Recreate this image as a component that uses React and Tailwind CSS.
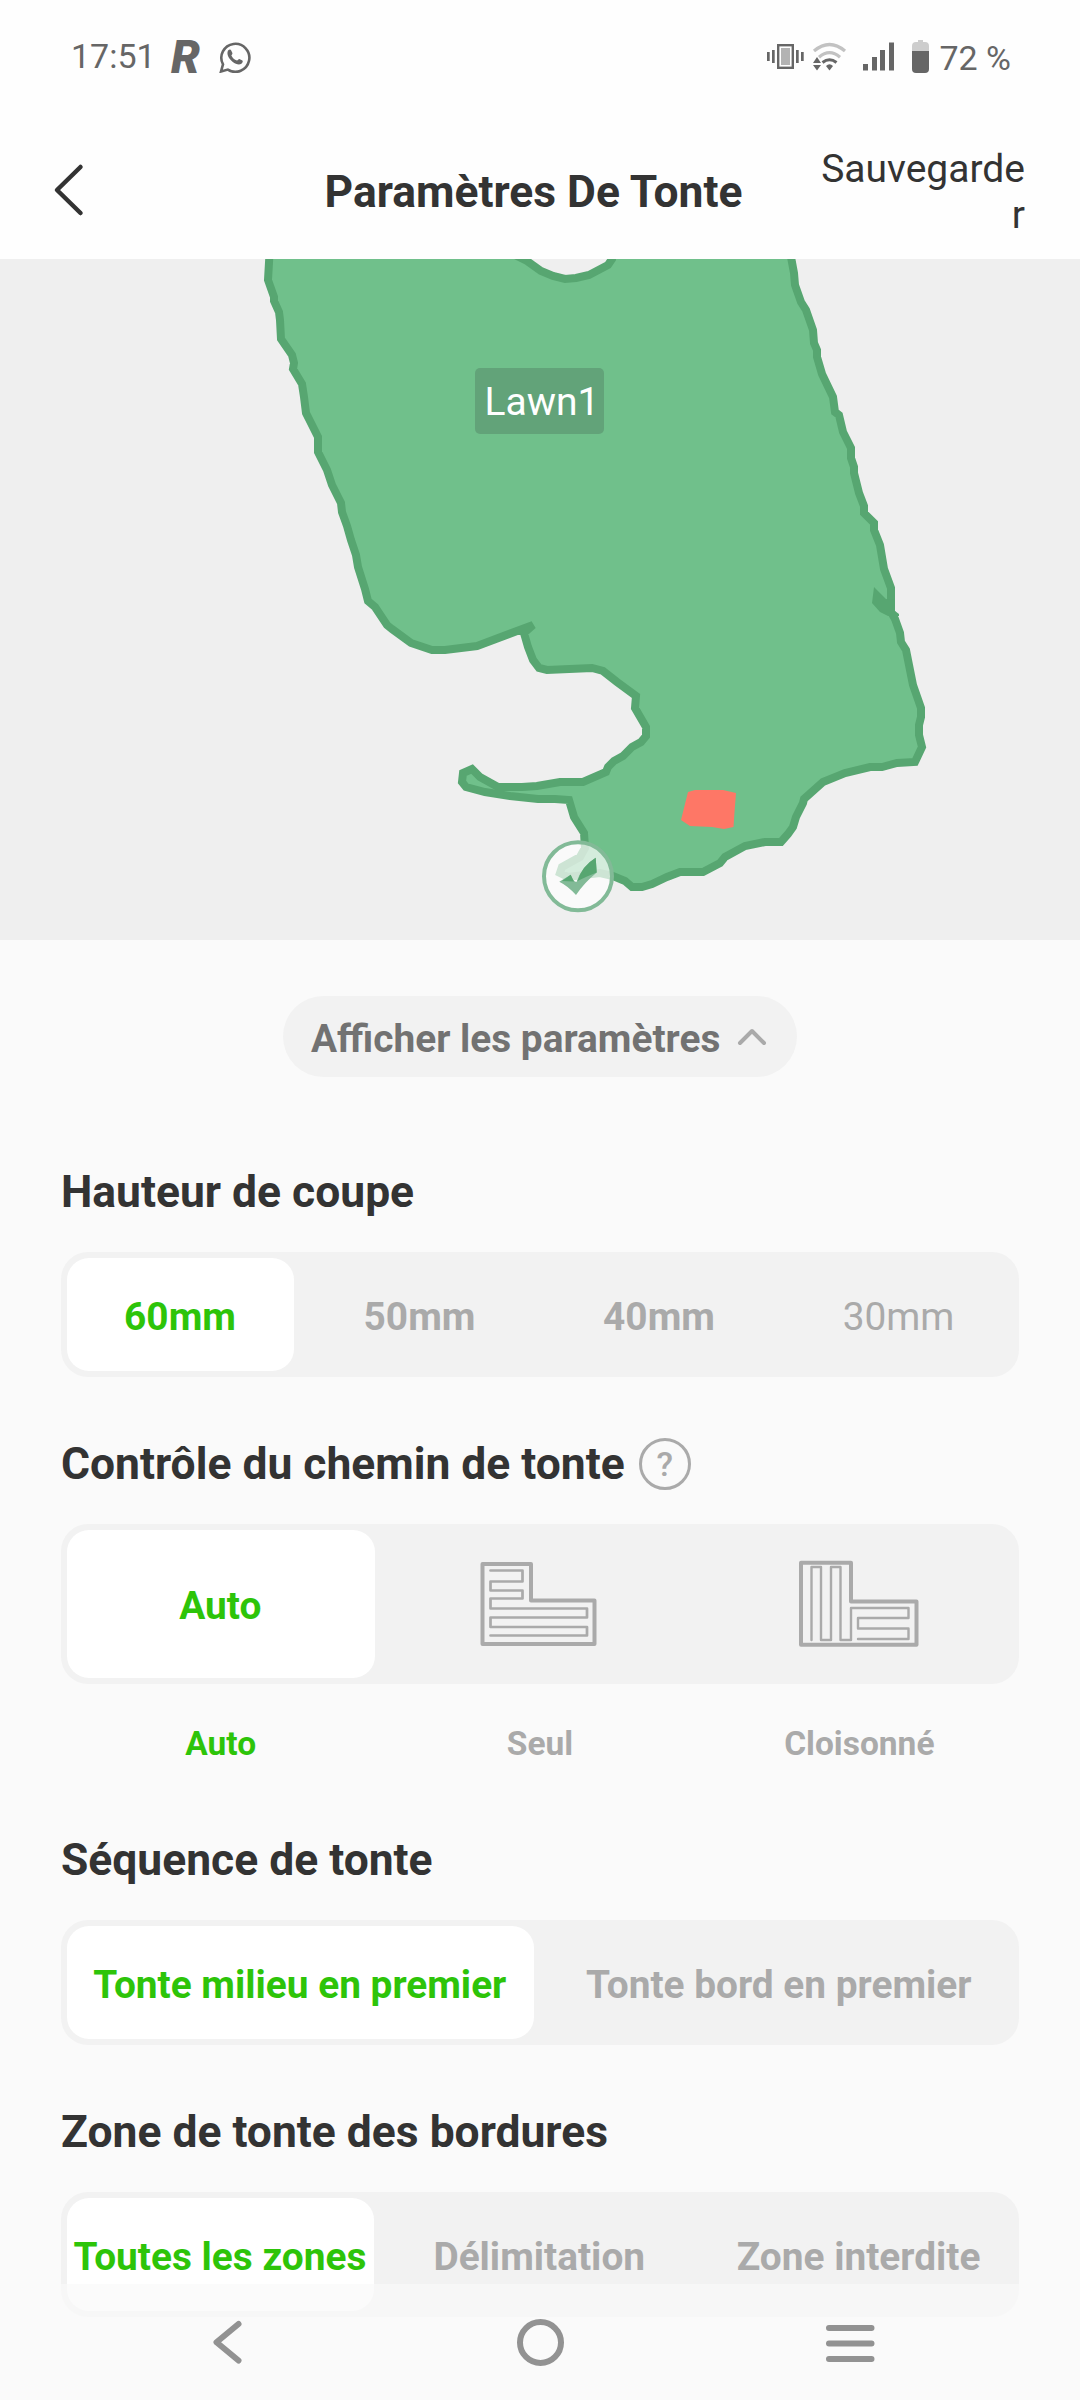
import React from "react";

const LAWN =
  "270,245 268,280 274,297 274,301 279,312 280,320 281,339 292,355 294,363 293,369 302,384 304,397 306,413 318,437 318,452 327,470 332,485 341,503 342,512 347,526 351,540 356,555 358,567 365,589 368,601 375,607 387,625 392,629 411,643 432,650 445,650 477,646 533,625 524,633 528,647 533,660 539,668 547,670 592,668 603,671 617,682 636,696 635,708 646,727 646,736 641,742 632,747 623,756 614,761 608,767 606,772 583,782 560,782 537,786 522,787 498,787 480,777 472,769 463,773 462,782 466,787 485,792 510,796 538,799 555,799 569,800 574,817 584,833 585,848 580,857 562,867 560,873 568,877 600,873 613,876 625,881 632,887 642,887 652,884 667,877 680,872 703,872 720,863 725,857 745,846 765,842 781,842 788,834 793,827 796,817 803,803 804,799 823,782 845,773 870,767 882,767 897,763 915,762 922,747 919,735 919,725 921,717 921,708 913,685 906,650 901,642 900,633 895,619 891,612 891,600 891,588 884,569 880,545 874,530 874,523 864,513 864,506 859,493 854,473 854,467 851,458 851,448 843,432 839,415 835,412 833,397 822,374 817,357 817,350 814,343 813,330 806,310 801,302 795,285 794,273 791,257 789,245 612,245 612,259 608,265 589,275 576,278 565,279 553,276 541,271 527,261 505,250 490,245";

function StatusBar() {
  return (
    <div className="flex h-[113px] items-start justify-between pl-[71px] pr-[69px] text-[#666]">
      <div className="flex h-[113px] items-center">
        <span className="w-[100px] text-[34px]">17:51</span>
        <span className="w-[48px] text-[46px] font-black italic leading-none">R</span>
        <svg className="h-[32px] w-[32px]" viewBox="0 0 32 32" fill="none">
          <path d="M2 30.5 4 23.4A14 14 0 1 1 8.8 28.6Z" stroke="#666" strokeWidth="2.6" />
          <path
            d="M9 9.5c1.600-1.500 2.600-1.300 3.200 0l1.200 2.500c.3 1-.9 1.900-1 2.500 1.200 2.500 3 4.200 5.600 5.100.8-.1 1.600-1.700 2.400-1.500l3 1.500c1 .7-.1 2.800-1.400 3.500-2.200 1.200-5.400.1-8.500-2.300-3.500-3-6.300-7.600-4.500-11.300Z"
            fill="#666"
          />
        </svg>
      </div>
      <div className="flex h-[114px] items-center">
        <svg className="h-[36px] w-[166px]" viewBox="766 39 166 36" fill="none">
          <rect x="778.2" y="45.200" width="14.600" height="22.600" stroke="#666" strokeWidth="2.400" />
          <rect x="781" y="48" width="9" height="17" fill="#b3b3b3" />
          <g fill="#666">
            <rect x="772" y="50" width="2.700" height="13" />
            <rect x="767" y="52" width="2.700" height="9" />
            <rect x="796" y="50" width="2.700" height="13" />
            <rect x="801" y="52" width="2.700" height="9" />
            <path d="m817 57 4 6h-8Zm0 13.500-4-5.500h8Z" />
            <path d="M826 66q3.500-3.500 7 0l-3.500 4.500Z" />
            <rect x="863" y="64" width="5" height="6.500" />
            <rect x="872" y="57" width="5" height="13.500" />
            <rect x="880" y="50" width="5" height="20.500" />
            <rect x="889" y="42.500" width="5" height="28" />
          </g>
          <path d="M814 51q15.500-13 31 0M819 57.200q10.500-9 21 0" stroke="#c2c2c2" strokeWidth="3.200" />
          <path d="M822.500 62.500q7-5.500 14 0" stroke="#666" strokeWidth="3" />
          <path d="M912 51v-5q0-4 4-4h2v-2h5v2h2q4 0 4 4v5Z" fill="#cdcdcd" />
          <path d="M912 51h17v18q0 4-4 4h-9q-4 0-4-4Z" fill="#666" />
        </svg>
        <span className="ml-[7px] mt-[2px] text-[34px]">72 %</span>
      </div>
    </div>
  );
}

function Header() {
  return (
    <div className="grid h-[146px] grid-cols-[294px_1fr_300px] items-start text-[#333]">
      <svg className="ml-[52px] mt-[49px] h-[56px] w-[34px]" viewBox="0 0 34 56" fill="none">
        <path d="M28.500 5 5 28l23.500 23" stroke="#333" strokeWidth="4.500" strokeLinecap="round" strokeLinejoin="round" />
      </svg>
      <h1 className="-ml-[7px] mt-[53px] whitespace-nowrap text-center text-[44.400px] font-bold leading-[52px]">Paramètres De Tonte</h1>
      <div className="mr-[55px] mt-[33px] text-right text-[39px] leading-[46px]">
        Sauvegarde
        <br />r
      </div>
    </div>
  );
}

function LawnMap() {
  return (
    <div className="relative h-[681px] overflow-hidden bg-[#efefef]">
      <svg className="block h-[681px] w-[1080px]" viewBox="0 259 1080 681">
        <polygon points={LAWN} fill="#70c08b" stroke="#57a671" strokeWidth="8" strokeMiterlimit="3" />
        <polygon points="874,587 872,603 880,612 888,616 899,616 899,614 895,611 895,600 886,599" fill="#57a671" />
        <polygon points="688,792 695,790 723,790 736,793 734.500,812 733.500,827 724,829 712,827 690,826 681,820" fill="#fe7766" />
        <circle cx="578" cy="876.300" r="34" fill="#fff" fillOpacity="0.700" />
        <circle cx="578" cy="876.300" r="34" fill="none" stroke="#82ba97" strokeWidth="4" />
        <path d="M595.700 857.700 596.700 872.500Q584 883 576 895 568 886 559.300 881.700L570.700 874.700Q573 882 576.500 882 582 866 595.700 857.700Z" fill="#82ba97" />
        <path d="M595.700 857.700 596.700 872.500 587 876.500 577.500 881Q582 866 595.700 857.700ZM562 881 570.700 874.700 574 881.500Z" fill="#57a671" />
      </svg>
      <div className="absolute left-[475px] top-[109px] flex h-[66px] w-[129px] items-center justify-center rounded-[5px] bg-[#62a379] pl-[5px] pt-[2px] text-[39px] text-white">
        Lawn1
      </div>
    </div>
  );
}

function SectionTitle({ children }) {
  return <h2 className="flex h-[52px] items-center whitespace-nowrap text-[44.400px] font-bold leading-[52px] text-[#333]">{children}</h2>;
}

function Segments({ items, tall }) {
  return (
    <div className={`mt-[34px] flex rounded-[27px] bg-[#f2f2f2] ${tall ? "h-[160px]" : "h-[125px]"}`}>
      {items.map((item, i) => (
        <div
          key={i}
          className={`my-[6px] ml-[6px] mr-[6.500px] flex min-w-0 flex-1 items-center justify-center whitespace-nowrap rounded-[22px] text-[38.850px] ${
            i === 0 ? "bg-white text-[#2dc409]" : "text-[#aaa]"
          } ${item === "30mm" ? "font-normal" : "font-bold"} ${typeof item === "string" ? "pr-px pt-[5px]" : ""}`}
        >
          {item}
        </div>
      ))}
    </div>
  );
}

function SinglePathIcon() {
  return (
    <svg className="-ml-[2px] h-[86px] w-[120px]" viewBox="479 1561 120 86" fill="none" stroke="#aaa" strokeLinejoin="round" strokeLinecap="round">
      <path d="M482.500 1564H531v36.500h63.500v43.500h-112Z" strokeWidth="4" />
      <path d="M490.500 1570.500H522.500v11H490.500v9H522.500v8H490.500v10H587v9H490.500v9.500H587v8.500H490.500" strokeWidth="2.700" />
    </svg>
  );
}

function SplitPathIcon() {
  return (
    <svg className="-ml-px h-[88px] w-[122px]" viewBox="798 1560 122 88" fill="none" stroke="#aaa" strokeLinejoin="round" strokeLinecap="round">
      <path d="M801 1562.700h50v38.800h65.500v43.200H801Z" strokeWidth="4" />
      <path d="M811.500 1640v-73h9.500v73h10v-73h9.500v73H851v-32h57.500v10H858v10.500h50.500v10.500H858" strokeWidth="2.400" />
    </svg>
  );
}

function NavBar() {
  return (
    <div className="absolute inset-x-0 bottom-0 h-[116px] bg-[#fafafa]/70">
      <svg className="block h-[116px] w-[1080px]" viewBox="0 2284 1080 116" fill="none" stroke="#929292" strokeWidth="6" strokeLinecap="round" strokeLinejoin="round">
        <path d="M238.500 2324 216.500 2342.300l22 18.200" />
        <circle cx="540.500" cy="2342.500" r="20.500" />
        <path d="M829 2328h42.500M829 2343.500h42.500M829 2359h42.500" />
      </svg>
    </div>
  );
}

export default function App() {
  return (
    <div className="relative h-[2400px] w-[1080px] overflow-hidden bg-[#fafafa] font-['Roboto',sans-serif]">
      <div className="bg-[#fefefe]">
        <StatusBar />
        <Header />
      </div>
      <LawnMap />
      <div className="flex flex-col px-[61px] pt-[56px]">
        <button className="mb-[89px] flex h-[81px] w-[514px] items-center self-center rounded-full bg-[#f2f2f2] pl-[28px] pt-[5px] text-[38.850px] font-bold text-[#727272]">
          <span className="whitespace-nowrap">Afficher les paramètres</span>
          <svg className="ml-[16px] -mt-[5px] h-[20px] w-[32px]" viewBox="0 0 32 20" fill="none">
            <path d="M4 16 16 4l12 12" stroke="#aaa" strokeWidth="4" strokeLinecap="round" strokeLinejoin="round" />
          </svg>
        </button>

        <SectionTitle>Hauteur de coupe</SectionTitle>
        <Segments items={["60mm", "50mm", "40mm", "30mm"]} />

        <div className="mt-[61px] flex items-center">
          <SectionTitle>Contrôle du chemin de tonte</SectionTitle>
          <span className="ml-[14px] flex h-[52px] w-[52px] items-center justify-center rounded-full border-[3px] border-[#aaa] text-[34px] font-medium text-[#aaa]">
            ?
          </span>
        </div>
        <Segments tall items={["Auto", <SinglePathIcon />, <SplitPathIcon />]} />
        <div className="mb-[75px] mt-[35px] grid h-[40px] grid-cols-3 items-center text-center text-[33.500px] font-bold text-[#aaa]">
          <span className="text-[#2dc409]">Auto</span>
          <span>Seul</span>
          <span>Cloisonné</span>
        </div>

        <SectionTitle>Séquence de tonte</SectionTitle>
        <Segments items={["Tonte milieu en premier", "Tonte bord en premier"]} />

        <div className="h-[61px]" />
        <SectionTitle>Zone de tonte des bordures</SectionTitle>
        <Segments items={["Toutes les zones", "Délimitation", "Zone interdite"]} />
      </div>
      <NavBar />
    </div>
  );
}
